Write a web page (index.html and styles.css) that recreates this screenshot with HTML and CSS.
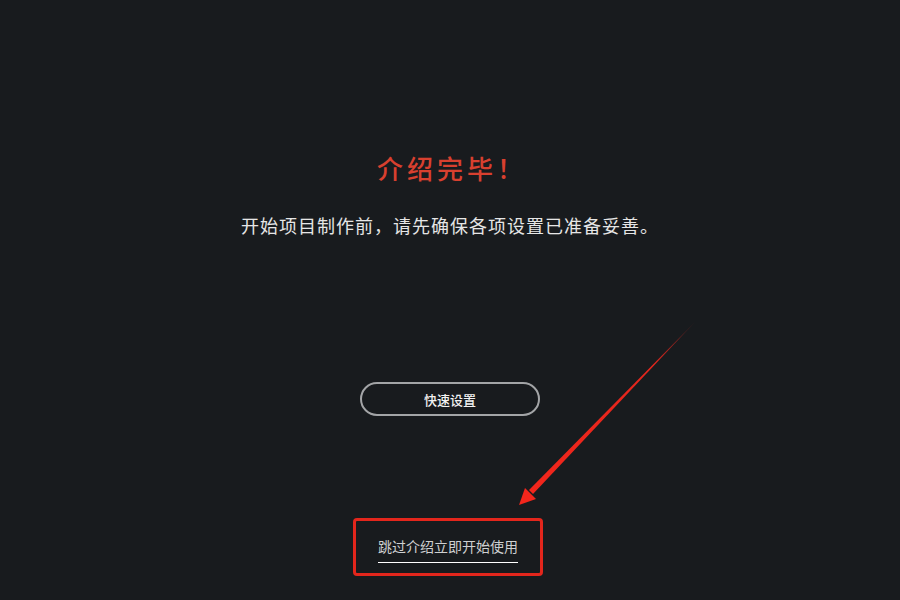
FILE: index.html
```html
<!DOCTYPE html>
<html lang="zh-CN">
  <head>
    <meta charset="UTF-8" />
    <meta name="viewport" content="width=device-width, initial-scale=1.0" />
    <title>介绍完毕</title>
    <link rel="stylesheet" href="styles.css">
  </head>
  <body>
    <div class="intro">
      <h2 class="intro-title">介绍完毕！</h2>
      <p class="intro-text">开始项目制作前，请先确保各项设置已准备妥善。</p>

      <button class="quick-btn">快速设置</button>

      <div class="skip-box">
        <a class="skip-link" href="#">跳过介绍立即开始使用</a>
      </div>
    </div>

    <!-- callout arrow pointing at the skip link -->
    <svg class="callout" width="900" height="600" viewBox="0 0 900 600">
      <defs>
        <linearGradient id="tail" x1="695" y1="322" x2="530" y2="492" gradientUnits="userSpaceOnUse">
          <stop offset="0" stop-color="#e3261c" stop-opacity="0.2" />
          <stop offset="0.25" stop-color="#e3261c" />
          <stop offset="1" stop-color="#f2261c" />
        </linearGradient>
      </defs>
      <polygon points="695,322 533,494 529,490" fill="url(#tail)" />
      <polygon points="519,505 525,488 530.5,493.5 536,499" fill="#f2261c" />
    </svg>
  </body>
</html>
```

FILE: styles.css
```css
* {
  margin: 0;
  padding: 0;
  box-sizing: border-box;
  font-family: "Noto Sans CJK SC", "Noto Sans", sans-serif;
}

body {
  background: #181b1e;
  min-height: 100vh;
  overflow: hidden;
}

.intro {
  display: flex;
  flex-direction: column;
  align-items: center;
  padding-top: 150px;
}

.intro-title {
  color: #d8402f;
  font-size: 26px;
  font-weight: 500;
  letter-spacing: 4px;
  line-height: 36px;
  padding-left: 4px;
}

.intro-text {
  margin-top: 27px;
  color: #e6e6e6;
  font-size: 18px;
  letter-spacing: 1px;
  line-height: 24px;
}

.quick-btn {
  margin-top: 145px;
  width: 180px;
  height: 34px;
  border: 2px solid #a3a5a7;
  border-radius: 17px;
  background: transparent;
  color: #f2f2f2;
  font-size: 13px;
  font-weight: 500;
  cursor: pointer;
}

.skip-box {
  margin-top: 102px;
  margin-right: 4px;
  width: 190px;
  height: 58px;
  border: 3px solid #e3261c;
  border-radius: 4px;
  display: flex;
  justify-content: center;
  align-items: center;
  padding-top: 4px;
}

.skip-link {
  color: #cfd0d1;
  font-size: 14px;
  text-decoration: none;
  line-height: 20px;
  padding-bottom: 6px;
  border-bottom: 1px solid #ffffff;
}

.callout {
  position: absolute;
  left: 0;
  top: 0;
  pointer-events: none;
}
```
